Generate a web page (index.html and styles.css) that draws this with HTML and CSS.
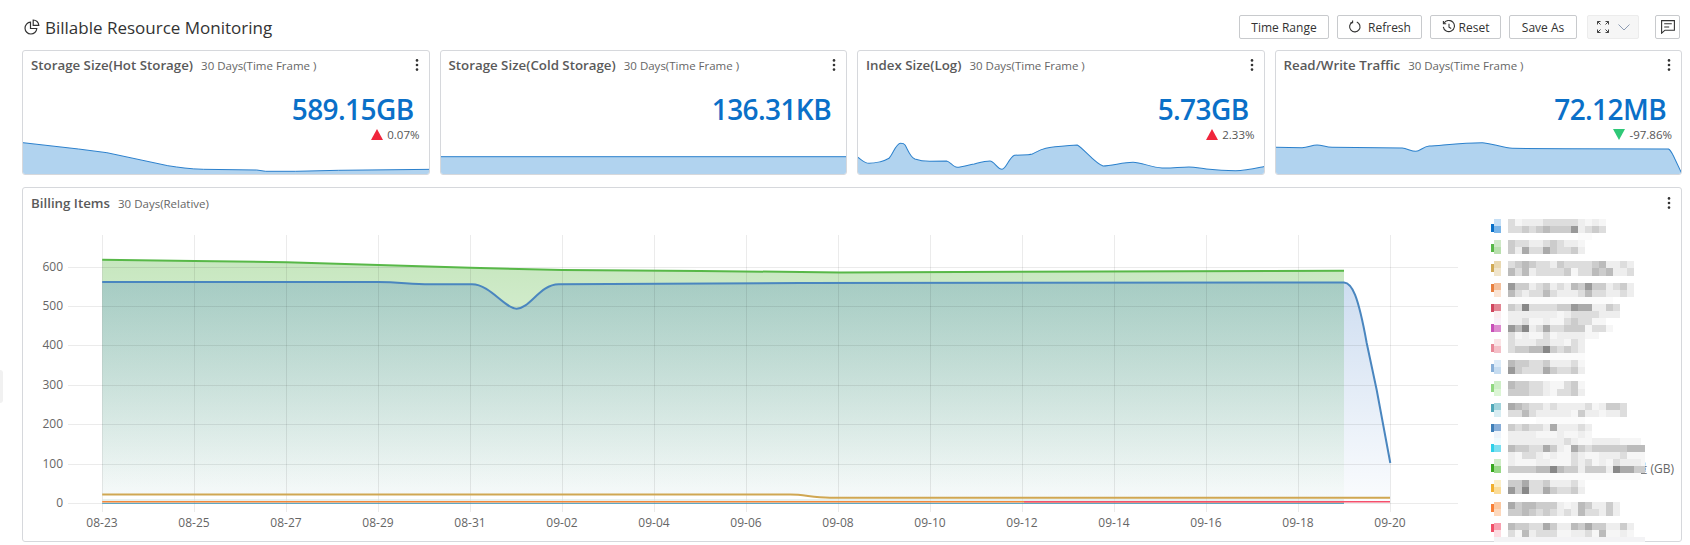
FILE: index.html
```html
<!DOCTYPE html>
<html lang="en">
<head>
    <meta charset="UTF-8">
    <meta name="viewport" content="width=device-width, initial-scale=1.0">
    <title>Billable Resource Monitoring</title>
    <link rel="stylesheet" href="styles.css">
</head>
<body>
    <div class="edge-tab"></div>

    <header class="top-bar">
        <h1 class="page-title">
            <svg class="title-icon" viewBox="0 0 16 16" fill="none" stroke="#333" stroke-width="1.2">
                <path d="M6.5 3.2a5.9 5.9 0 1 0 6.3 6.3H6.5z"/>
                <path d="M9.2 1v5.3h5.6A5.6 5.6 0 0 0 9.2 1z"/>
            </svg>
            Billable Resource Monitoring
        </h1>
        <div class="toolbar">
            <button class="btn btn-range">Time Range</button>
            <button class="btn btn-refresh">
                <svg class="btn-icon" viewBox="0 0 14 14" fill="none" stroke="#333" stroke-width="1.1">
                    <path d="M8.8 1.9a5.2 5.2 0 1 1-4.6.3"/>
                    <path d="M4.6 .6v2.2H2.4"/>
                </svg>
                Refresh
            </button>
            <button class="btn btn-reset">
                <svg class="btn-icon" viewBox="0 0 14 14" fill="none" stroke="#333" stroke-width="1.1">
                    <path d="M1.9 3.4a5.6 5.6 0 1 1-.6 3.4"/>
                    <path d="M1.4 .9v2.8h2.8"/>
                    <path d="M7 3.8v3.4l2.2 1.2"/>
                </svg>
                Reset
            </button>
            <button class="btn btn-save">Save As</button>
            <button class="btn btn-expand">
                <svg class="expand-icon" viewBox="0 0 12 12" fill="none" stroke="#444" stroke-width="1">
                    <path d="M.5 3.5v-3h3M.5 .5l3 3M11.5 3.5v-3h-3M11.5 .5l-3 3M.5 8.5v3h3M.5 11.5l3-3M11.5 8.5v3h-3M11.5 11.5l-3-3"/>
                </svg>
                <svg class="chevron-icon" viewBox="0 0 12 7" fill="none" stroke="#8d9cb3" stroke-width="1">
                    <path d="M.5 .5L6 6l5.5-5.5"/>
                </svg>
            </button>
            <button class="btn btn-note">
                <svg class="note-icon" viewBox="0 0 14 14" fill="none" stroke="#333" stroke-width="1.1">
                    <path d="M.6 .6h12.8v9.6H4L.6 13.2z"/>
                    <path d="M3.2 3.8h7.6M3.2 7h5"/>
                </svg>
            </button>
        </div>
    </header>

    <section class="stat-row">
        <article class="stat-card">
            <div class="card-head">
                <span class="card-title">Storage Size(Hot Storage)</span>
                <span class="card-range">30 Days(Time Frame )</span>
                <svg class="kebab" viewBox="0 0 4 12" fill="#333"><circle cx="2" cy="1.4" r="1.3"/><circle cx="2" cy="6" r="1.3"/><circle cx="2" cy="10.6" r="1.3"/></svg>
            </div>
            <div class="stat-value">589.15GB</div>
            <div class="stat-delta"><i class="tri tri-up"></i>0.07%</div>
            <svg class="spark" viewBox="23 141 406 33" preserveAspectRatio="none">
                <path class="spark-line" d="M18 142L23 142.7 78.6 149 107 152.7 168 165.7C180 167.5 190 169 203.6 169.3L257 170 266 171.3H296L339 170.3 434 169.3V180H18z"/>
            </svg>
        </article>
        <article class="stat-card">
            <div class="card-head">
                <span class="card-title">Storage Size(Cold Storage)</span>
                <span class="card-range">30 Days(Time Frame )</span>
                <svg class="kebab" viewBox="0 0 4 12" fill="#333"><circle cx="2" cy="1.4" r="1.3"/><circle cx="2" cy="6" r="1.3"/><circle cx="2" cy="10.6" r="1.3"/></svg>
            </div>
            <div class="stat-value">136.31KB</div>
            <svg class="spark" viewBox="441 141 406 33" preserveAspectRatio="none">
                <path class="spark-line" d="M436 156.7H852V180H436z"/>
            </svg>
        </article>
        <article class="stat-card">
            <div class="card-head">
                <span class="card-title">Index Size(Log)</span>
                <span class="card-range">30 Days(Time Frame )</span>
                <svg class="kebab" viewBox="0 0 4 12" fill="#333"><circle cx="2" cy="1.4" r="1.3"/><circle cx="2" cy="6" r="1.3"/><circle cx="2" cy="10.6" r="1.3"/></svg>
            </div>
            <div class="stat-value">5.73GB</div>
            <div class="stat-delta"><i class="tri tri-up"></i>2.33%</div>
            <svg class="spark" viewBox="859 141 405 33" preserveAspectRatio="none">
                <path class="spark-line" d="M854 154L859 157.3C864 161 866 163.3 870 163.3C875 163.3 878 162.5 881.4 161.7C885 161 887 160 890 158.3C894 154 897 143.3 901.5 143.3C904 143.3 905 143.5 906 145C909 150 911 157 915.8 159C920 160.5 925 161.3 930.5 161.3L947.5 161C951 161.5 954 167.3 958 167.3C963 167.3 969 165 975 164C981 162.5 986 161 990.8 161C995 161 998 169.3 1002.9 169.3C1007 169.3 1010 157 1015.4 155.3C1020 154.5 1028 155.5 1033 154C1037 152 1041 149.5 1046.6 148.3C1055 146.5 1066 146 1077.9 145C1084 148 1096 164 1103.8 166C1112 166 1124 162.3 1133.7 162.3C1142 162.3 1152 167.5 1162.7 168C1172 168.3 1181 167 1189.5 167C1196 167 1201 168.5 1207 169C1216 170 1226 170.7 1236 170.7C1246 170.7 1253 169 1264 166.7L1270 165.5V180H854z"/>
            </svg>
        </article>
        <article class="stat-card">
            <div class="card-head">
                <span class="card-title">Read/Write Traffic</span>
                <span class="card-range">30 Days(Time Frame )</span>
                <svg class="kebab" viewBox="0 0 4 12" fill="#333"><circle cx="2" cy="1.4" r="1.3"/><circle cx="2" cy="6" r="1.3"/><circle cx="2" cy="10.6" r="1.3"/></svg>
            </div>
            <div class="stat-value">72.12MB</div>
            <div class="stat-delta"><i class="tri tri-down"></i>-97.86%</div>
            <svg class="spark" viewBox="1277 141 405 33" preserveAspectRatio="none">
                <path class="spark-line" d="M1272 147.3H1277L1303 147.7C1309 147.5 1313 145 1318 145C1323 145 1327 147.3 1333 147.3L1403 148C1408 148.5 1412 151.3 1416.7 151.3C1421 151.3 1424 146.5 1430 146C1445 145 1465 142.7 1483 142.7C1490 142.7 1505 148.3 1513 148.3L1566.7 148.7 1669 149C1671 150 1673 154 1674 156L1682 173L1688 180H1272z"/>
            </svg>
        </article>
    </section>

    <section class="chart-panel">
        <div class="panel-head">
            <span class="card-title">Billing Items</span>
            <span class="card-range">30 Days(Relative)</span>
            <svg class="kebab" viewBox="0 0 4 12" fill="#333"><circle cx="2" cy="1.4" r="1.3"/><circle cx="2" cy="6" r="1.3"/><circle cx="2" cy="10.6" r="1.3"/></svg>
        </div>
        <div class="panel-body">
            <svg class="chart" viewBox="23 214 1458 327">
                <defs>
                    <linearGradient id="fade-green" gradientUnits="userSpaceOnUse" x1="0" y1="260" x2="0" y2="503">
                        <stop offset="0" stop-color="#53b53c" stop-opacity=".33"/>
                        <stop offset="1" stop-color="#53b53c" stop-opacity=".01"/>
                    </linearGradient>
                    <linearGradient id="fade-blue" gradientUnits="userSpaceOnUse" x1="0" y1="282" x2="0" y2="503">
                        <stop offset="0" stop-color="#2a6cc0" stop-opacity=".23"/>
                        <stop offset="1" stop-color="#2a6cc0" stop-opacity=".02"/>
                    </linearGradient>
                </defs>

                <path fill="url(#fade-green)" d="M102.2 259.7L194.4 261 286.3 262.3 378.5 265 470.3 267.7 562.6 270 700 271 840 272.4 1344 270.7V503.5H102.2z"/>
                <path fill="url(#fade-blue)" d="M102.2 282H378C400 282 410 284.3 430 284.3H472C490 284.3 505 308.7 516.6 308.7C530 308.7 540 284.3 558.7 284.3L800 283 1344 282.5C1352 283 1358 295 1366.7 343L1376.7 390 1390.3 463V503.5H102.2z"/>
                <path fill="#fff" fill-opacity=".85" d="M102.2 494.5H790C805 494.5 812 497.7 830 497.7H1344V500.5H102.2z"/>

                <path class="grid" d="M68 267.5H1458M68 306.5H1458M68 345.5H1458M68 385.5H1458M68 424.5H1458M68 464.5H1458M68 503.5H1458"/>
                <path class="grid" d="M102.5 235V512M194.5 235V512M286.5 235V512M378.5 235V512M470.5 235V512M562.5 235V512M654.5 235V512M746.5 235V512M838.5 235V512M930.5 235V512M1022.5 235V512M1114.5 235V512M1206.5 235V512M1298.5 235V512M1390.5 235V512"/>

                <path class="series" stroke="#d0a752" d="M102.2 494.5H790C805 494.5 812 497.7 830 497.7H1390"/>
                <path class="series thin" stroke="#cfe3df" d="M102.2 500H1344"/>
                <path class="series thin" stroke="#3d97b8" d="M102.2 503.3H1344"/>
                <path class="series mid" stroke="#f5883a" d="M102.2 501.7H1344"/>
                <path class="series mid" stroke="#f5506c" d="M1024 501.8H1390"/>
                <path class="series" stroke="#58b848" d="M102.2 259.7L194.4 261 286.3 262.3 378.5 265 470.3 267.7 562.6 270 700 271 840 272.4 1344 270.7"/>
                <path class="series" stroke="#4a86bf" d="M102.2 282H378C400 282 410 284.3 430 284.3H472C490 284.3 505 308.7 516.6 308.7C530 308.7 540 284.3 558.7 284.3L800 283 1344 282.5C1352 283 1358 295 1366.7 343L1376.7 390 1390.3 463"/>

                <g class="axis-y">
                    <text x="63" y="271">600</text>
                    <text x="63" y="310">500</text>
                    <text x="63" y="349">400</text>
                    <text x="63" y="389">300</text>
                    <text x="63" y="428">200</text>
                    <text x="63" y="468">100</text>
                    <text x="63" y="507">0</text>
                </g>
                <g class="axis-x">
                    <text x="102" y="527">08-23</text>
                    <text x="194" y="527">08-25</text>
                    <text x="286" y="527">08-27</text>
                    <text x="378" y="527">08-29</text>
                    <text x="470" y="527">08-31</text>
                    <text x="562" y="527">09-02</text>
                    <text x="654" y="527">09-04</text>
                    <text x="746" y="527">09-06</text>
                    <text x="838" y="527">09-08</text>
                    <text x="930" y="527">09-10</text>
                    <text x="1022" y="527">09-12</text>
                    <text x="1114" y="527">09-14</text>
                    <text x="1206" y="527">09-16</text>
                    <text x="1298" y="527">09-18</text>
                    <text x="1390" y="527">09-20</text>
                </g>
            </svg>
            <aside class="legend">
                <div class="legend-bars" id="legend-bars"></div>
                <span class="legend-unit">量 (GB)</span>
                <div class="legend-mosaic" id="legend-mosaic"></div>
            </aside>
        </div>
    </section>

    <script src="legend.js"></script>
</body>
</html>
```

FILE: styles.css
```css
* {
    box-sizing: border-box;
}

body {
    margin: 0;
    padding: 15px 8px 0 22px;
    background-color: #fff;
    color: #333;
    font-family: "Open Sans", "Liberation Sans", sans-serif;
    overflow: hidden;
}

.edge-tab {
    position: absolute;
    top: 370px;
    left: 0;
    width: 3px;
    height: 33px;
    background-color: #f1f1f1;
    border-radius: 0 3px 3px 0;
}

.top-bar {
    display: flex;
    justify-content: space-between;
    align-items: center;
    height: 24px;
    padding-right: 2px;
}

.page-title {
    display: flex;
    align-items: center;
    gap: 5px;
    margin: 0 0 0 2px;
    font-size: 17px;
    font-weight: 400;
    color: #333;
}

.title-icon {
    width: 16px;
    height: 16px;
    flex: none;
}

.toolbar {
    display: flex;
}

.btn {
    display: flex;
    align-items: center;
    justify-content: center;
    gap: 6px;
    height: 24px;
    margin-left: 8px;
    padding: 0;
    background-color: #fff;
    border: 1px solid #c8cacd;
    border-radius: 2px;
    color: #333;
    font-family: inherit;
    font-size: 12px;
}

.btn-range {
    width: 90px;
}

.btn-refresh {
    width: 85px;
}

.btn-reset {
    width: 71px;
    gap: 3px;
}

.btn-save {
    width: 68px;
}

.btn-expand {
    width: 52px;
    margin-left: 10px;
    gap: 9px;
    background-color: #f6f6f6;
    border-color: #ececec;
}

.btn-note {
    width: 25px;
    margin-left: 16px;
}

.btn-icon {
    width: 14px;
    height: 14px;
    flex: none;
}

.expand-icon {
    width: 12px;
    height: 12px;
    flex: none;
}

.chevron-icon {
    width: 12px;
    height: 7px;
    flex: none;
}

.note-icon {
    width: 14px;
    height: 14px;
    flex: none;
}

.stat-row {
    display: grid;
    grid-template-columns: repeat(4, 1fr);
    gap: 10px;
    margin-top: 11px;
}

.stat-card {
    display: flex;
    flex-direction: column;
    height: 125px;
    background-color: #fff;
    border: 1px solid #d6d8dc;
    border-radius: 3px;
    overflow: hidden;
}

.card-head,
.panel-head {
    display: flex;
    align-items: center;
    gap: 8px;
    height: 16px;
    margin-top: 6px;
    padding: 0 10px 0 8px;
    flex: none;
}

.card-title {
    font-size: 13.3px;
    font-weight: 600;
    color: #5a5a5a;
}

.card-range {
    font-size: 11.5px;
    color: #666;
}

.kebab {
    width: 4px;
    height: 12px;
    margin-left: auto;
}

.stat-value {
    margin-top: 21px;
    padding-right: 15px;
    font-size: 28px;
    font-weight: 600;
    line-height: 30px;
    letter-spacing: -0.6px;
    text-align: right;
    color: #0a70c8;
}

.stat-delta {
    display: flex;
    justify-content: flex-end;
    align-items: center;
    gap: 4px;
    height: 14px;
    margin-top: 3px;
    padding-right: 9px;
    font-size: 11.5px;
    color: #555;
}

.tri {
    width: 0;
    height: 0;
    border-left: 6px solid transparent;
    border-right: 6px solid transparent;
}

.tri-up {
    border-bottom: 11px solid #f0263c;
}

.tri-down {
    border-top: 11px solid #2fc877;
}

.spark {
    display: block;
    width: 100%;
    height: 33px;
    margin-top: auto;
    flex: none;
}

.spark-line {
    fill: #b1d3ef;
    stroke: #2b80cc;
    stroke-width: 1;
}

.chart-panel {
    display: flex;
    flex-direction: column;
    height: 355px;
    margin-top: 12px;
    background-color: #fff;
    border: 1px solid #d6d8dc;
    border-radius: 3px;
}

.panel-head {
    margin-top: 7px;
    margin-bottom: 3px;
}

.panel-body {
    display: flex;
    flex: 1;
}

.chart {
    display: block;
    width: 1458px;
    height: 327px;
    flex: none;
}

.grid {
    fill: none;
    stroke: #000;
    stroke-opacity: 0.08;
    stroke-width: 1;
}

.series {
    fill: none;
    stroke-width: 2;
}

.mid {
    stroke-width: 1.5;
}

.thin {
    stroke-width: 1;
}

.axis-y text,
.axis-x text {
    font-size: 12px;
    fill: #666;
}

.axis-y text {
    text-anchor: end;
}

.axis-x text {
    text-anchor: middle;
}

.legend {
    position: relative;
    flex: 1;
    padding: 10px 0 0 10px;
}

.legend-bars {
    display: flex;
    flex-direction: column;
    gap: 12px;
}

.legend-bar {
    width: 3px;
    height: 8px;
}

.legend-unit {
    position: absolute;
    top: 247px;
    right: 7px;
    font-family: "Open Sans", "Noto Sans CJK SC", sans-serif;
    font-size: 12px;
    line-height: 16px;
    color: #666;
}

.legend-mosaic {
    position: absolute;
    top: 5px;
    left: 13px;
    display: grid;
    grid-template-columns: repeat(21, 7px) 4px;
    grid-auto-rows: 7.07px;
}
```

FILE: legend.js
```javascript
// legend labels are blurred out in the source, so they are just blocks of grey
const _barColors = [
    "#0a70c8", "#58b848", "#d0aa55", "#e88040", "#d04860", "#c850b8", "#e88898", "#88b0d8",
    "#90d880", "#50a8b8", "#4080b8", "#30d0e8", "#38a820", "#f0b030", "#f88038", "#f05068"
];

// row index -> colour of the blurred swatch
const _swatches = {
    0: "#c6dff5", 1: "#7ab5e8", 3: "#cfe8c8", 4: "#b9dfae", 6: "#e9d8b0", 7: "#f0e5cc",
    9: "#f4c09c", 10: "#fae4d4", 12: "#e28694", 13: "#faeef0", 14: "#f8f0f8", 15: "#dd8ccf",
    17: "#fae4e6", 18: "#f4c0c8", 20: "#dcebf8", 21: "#c6dcf0", 23: "#cdeec6", 24: "#dcf5d5",
    26: "#a2d4dc", 27: "#d8edf2", 29: "#88aed8", 30: "#eef4fa", 31: "#f0fbfe", 32: "#7cdff0",
    34: "#d0ecc8", 35: "#98d888", 37: "#fbeec8", 38: "#fbdc98", 40: "#fcc8a0", 41: "#fdd8bc",
    43: "#f8a0b0", 44: "#fcdce2", 45: "#f3f3f5"
};

// one char per 7px block: hex digit = grey level, f/g = near white, . = nothing
const _shades = [
    "dfeeedddddefef",
    "ddcdcbccc9edcd",
    "..........gg",
    "cddeedcdeef",
    "ceaddacddce",
    "",
    "dcbcddecddddcbeede",
    "bdbeddddcfddbcbeed",
    "",
    "9ccedcedebc9ccedce",
    "bdeddbdeeedbddeede",
    "ggggggggggggggg",
    "cd8ddddcc9aaeecd",
    "eeeeeeefeddddeee",
    "eedffeffdcddff",
    "9b8edaddcccfddf",
    "dfeffdfeeeeff",
    "deeeddeefde",
    "dccbb8cdcde",
    "......ggggg",
    "bccddceeedf",
    "9cdddacddce",
    "",
    "bccddeffdcf",
    "cccddefddce",
    "",
    "abcddedeeeedfeccd",
    "ddbdeeeeefceefeed",
    "....ggggggg",
    "cdcddeaeeede",
    "eeeefffeffef",
    "eeeeeeeedeffeeeefff",
    "bccddacefacdcccccbbb",
    "efddefeffdeffeeedfff",
    "efffeefffdedfefdeeef",
    "ccccbb8bcceccce8aacc",
    "ggggggggggggggggggg",
    "ccaddceeedf",
    "9c8ddacddce",
    "",
    "acbbcccefebceece",
    "ccbcdcdedebddece",
    "",
    "bccddaceebcacceece",
    "dfbedddffeedfbffef",
    "ffffffffffffffffffff"
];

function shadeColor(ch) {
    if (ch === "f") return "#f6f6f6";
    if (ch === "g") return "#fbfbfb";
    let level = parseInt(ch, 16) * 17;
    return "rgb(" + level + "," + level + "," + level + ")";
}

function makeCell(color) {
    let cell = document.createElement("div");
    if (color) {
        cell.style.backgroundColor = color;
    }
    return cell;
}

function main() {
    const barBox = document.getElementById("legend-bars");
    const mosaic = document.getElementById("legend-mosaic");

    _barColors.forEach(color => {
        let bar = document.createElement("div");
        bar.className = "legend-bar";
        bar.style.backgroundColor = color;
        barBox.appendChild(bar);
    });

    _shades.forEach((row, rowIndex) => {
        mosaic.appendChild(makeCell(_swatches[rowIndex]));
        // last row is one flat strip, no gap after the swatch
        mosaic.appendChild(makeCell(rowIndex === 45 ? _swatches[45] : null));
        for (let i = 0; i < 20; i++) {
            let ch = row[i];
            if (rowIndex === 45) {
                mosaic.appendChild(makeCell(_swatches[45]));
            } else {
                mosaic.appendChild(makeCell(ch && ch !== "." ? shadeColor(ch) : null));
            }
        }
    });
}

main();
```
